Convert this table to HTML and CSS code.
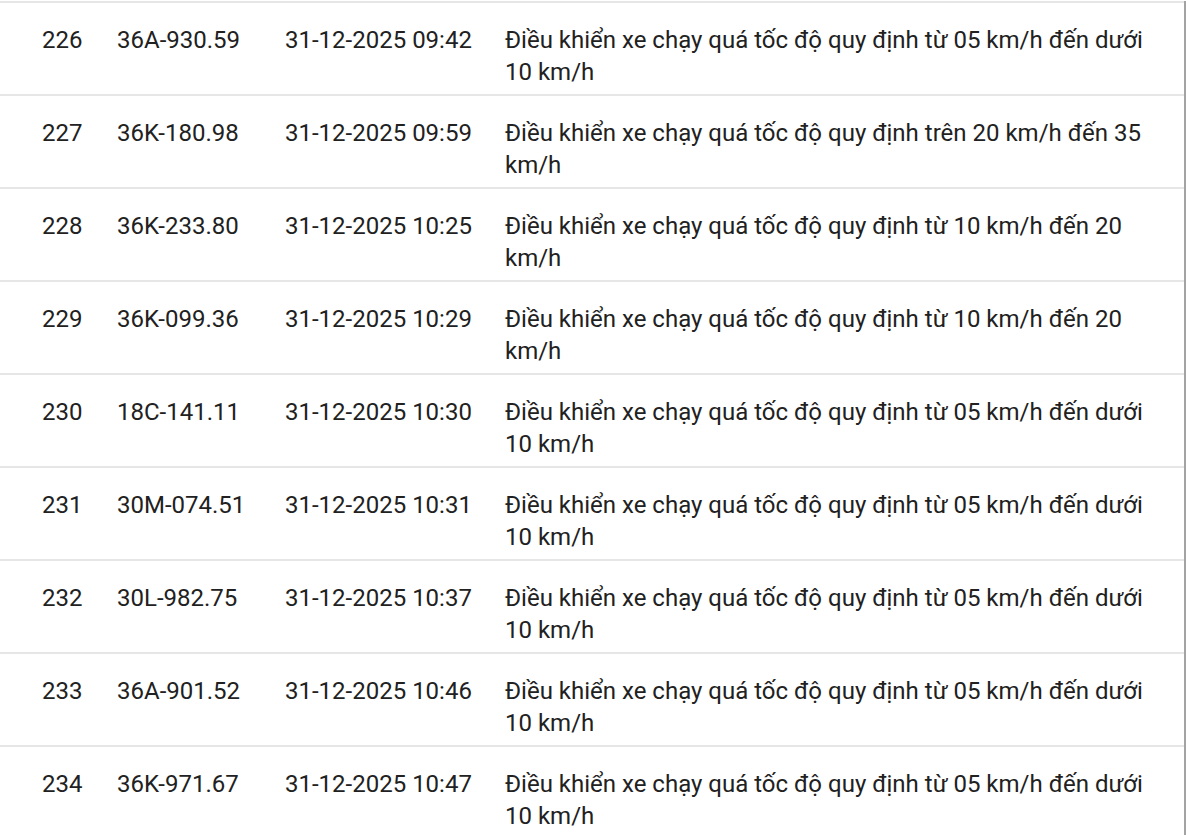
FILE: index.html
```html
<!DOCTYPE html>
<html lang="vi">
<head>
<meta charset="utf-8">
<title>Danh sách vi phạm</title>
<link rel="stylesheet" href="styles.css">
</head>
<body>
<div class="table">
  <div class="row"><div class="c-no">226</div><div class="c-plate">36A-930.59</div><div class="c-time">31-12-2025 09:42</div><div class="c-desc">Điều khiển xe chạy quá tốc độ quy định từ 05 km/h đến dưới 10 km/h</div></div>
  <div class="row"><div class="c-no">227</div><div class="c-plate">36K-180.98</div><div class="c-time">31-12-2025 09:59</div><div class="c-desc">Điều khiển xe chạy quá tốc độ quy định trên 20 km/h đến 35 km/h</div></div>
  <div class="row"><div class="c-no">228</div><div class="c-plate">36K-233.80</div><div class="c-time">31-12-2025 10:25</div><div class="c-desc">Điều khiển xe chạy quá tốc độ quy định từ 10 km/h đến 20 km/h</div></div>
  <div class="row"><div class="c-no">229</div><div class="c-plate">36K-099.36</div><div class="c-time">31-12-2025 10:29</div><div class="c-desc">Điều khiển xe chạy quá tốc độ quy định từ 10 km/h đến 20 km/h</div></div>
  <div class="row"><div class="c-no">230</div><div class="c-plate">18C-141.11</div><div class="c-time">31-12-2025 10:30</div><div class="c-desc">Điều khiển xe chạy quá tốc độ quy định từ 05 km/h đến dưới 10 km/h</div></div>
  <div class="row"><div class="c-no">231</div><div class="c-plate">30M-074.51</div><div class="c-time">31-12-2025 10:31</div><div class="c-desc">Điều khiển xe chạy quá tốc độ quy định từ 05 km/h đến dưới 10 km/h</div></div>
  <div class="row"><div class="c-no">232</div><div class="c-plate">30L-982.75</div><div class="c-time">31-12-2025 10:37</div><div class="c-desc">Điều khiển xe chạy quá tốc độ quy định từ 05 km/h đến dưới 10 km/h</div></div>
  <div class="row"><div class="c-no">233</div><div class="c-plate">36A-901.52</div><div class="c-time">31-12-2025 10:46</div><div class="c-desc">Điều khiển xe chạy quá tốc độ quy định từ 05 km/h đến dưới 10 km/h</div></div>
  <div class="row"><div class="c-no">234</div><div class="c-plate">36K-971.67</div><div class="c-time">31-12-2025 10:47</div><div class="c-desc">Điều khiển xe chạy quá tốc độ quy định từ 05 km/h đến dưới 10 km/h</div></div>
</div>
</body>
</html>
```
FILE: styles.css
```css
html, body {
  margin: 0;
  padding: 0;
  background: #ffffff;
}
body {
  font-family: Roboto, "Noto Sans", sans-serif;
  font-size: 24px;
  line-height: 32px;
  color: #212121;
  overflow: hidden;
}
.table {
  width: 1184px;
  margin-top: 1px;
  border-right: 2px solid #a3a3a3;
}
.row {
  display: grid;
  grid-template-columns: 75px 168px 220px 1fr;
  padding: 21px 24px 6px 42px;
  border-top: 2px solid #e6e6e6;
  height: 64px;
}
.c-desc {
  min-width: 0;
}
```
